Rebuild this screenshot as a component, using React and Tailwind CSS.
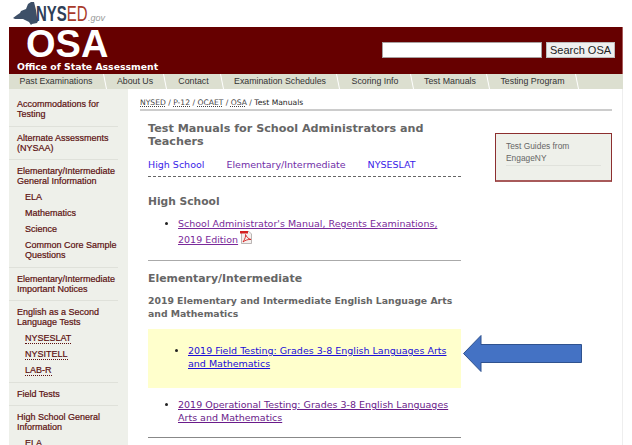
import React from "react";

const tabs = [
  { label: "Past Examinations", w: "w-[98px]" },
  { label: "About Us", w: "w-[60px]" },
  { label: "Contact", w: "w-[57px]" },
  { label: "Examination Schedules", w: "w-[116px]" },
  { label: "Scoring Info", w: "w-[74px]" },
  { label: "Test Manuals", w: "w-[76px]" },
  { label: "Testing Program", w: "w-[89px]" },
];

const sideGroups = [
  { title: ["Accommodations for", "Testing"] },
  { title: ["Alternate Assessments", "(NYSAA)"] },
  {
    title: ["Elementary/Intermediate", "General Information"],
    items: [{ t: ["ELA"] }, { t: ["Mathematics"] }, { t: ["Science"] }, { t: ["Common Core Sample", "Questions"] }],
  },
  { title: ["Elementary/Intermediate", "Important Notices"] },
  {
    title: ["English as a Second", "Language Tests"],
    items: [
      { t: ["NYSESLAT"], u: true },
      { t: ["NYSITELL"], u: true },
      { t: ["LAB-R"], u: true },
    ],
  },
  { title: ["Field Tests"] },
  { title: ["High School General", "Information"], items: [{ t: ["ELA"] }] },
];

function Logo() {
  return (
    <div className="h-[27px] flex items-center pl-[3px] font-['Liberation_Sans',sans-serif]">
      <svg width="27" height="24" viewBox="0 0 27 24" className="mr-[-3px] shrink-0">
        <path
          d="M1 16 L5 13 L8 11 L9 9 L14 7 L16 2 L19 0 L22 0 L24 8 L25 15 L26 19 L25 21 L20 22 L19 23 L17 20 L11 17 L3 17 Z"
          fill="#3e5068"
        />
      </svg>
      <div className="w-[52px] shrink-0">
        <div className="origin-left scale-x-[0.68] text-[22px] leading-none whitespace-nowrap">
          <span className="font-bold text-[#2f4058]">NYS</span>
          <span className="text-[#a83a2a]">ED</span>
        </div>
      </div>
      <span className="text-[9px] leading-none italic text-[#9a9a9a] mt-[9px]">.gov</span>
    </div>
  );
}

function Header() {
  return (
    <div className="h-[47px] bg-[#660000] flex justify-between border-r border-[#a85a5a]">
      <div className="pl-[8px] text-white">
        <div className="font-['Liberation_Sans',sans-serif] font-bold text-[38px] leading-[33px] pl-[9px] pt-[1px] h-[34px]">OSA</div>
        <div className="font-['DejaVu_Sans',sans-serif] font-bold text-[9.3px] leading-[11px] whitespace-nowrap">Office of State Assessment</div>
      </div>
      <div className="flex items-start pt-[15px] pr-[7px] gap-[4px]">
        <div className="w-[160px] h-[16px] bg-white border border-[#a8a0a0]"></div>
        <div className="w-[69px] h-[16px] bg-[#efefef] border border-[#bbbbbb] font-['Liberation_Sans',sans-serif] text-[11px] leading-[14px] text-center text-[#222222]">
          Search OSA
        </div>
      </div>
    </div>
  );
}

function Tabs() {
  return (
    <div className="h-[15px] bg-[#dcdfd0] flex font-['Liberation_Sans',sans-serif] text-[8.8px] leading-[15px] text-[#333333]">
      {tabs.map((tab) => (
        <div key={tab.label} className={`${tab.w} relative text-center whitespace-nowrap pr-[4px]`}>
          {tab.label}
          <svg width="4" height="15" viewBox="0 0 4 15" className="absolute right-0 top-0">
            <path d="M0.5 0 L3.5 15" stroke="#ffffff" strokeWidth="1" />
          </svg>
        </div>
      ))}
    </div>
  );
}

function Sidebar() {
  return (
    <div className="w-[119px] shrink-0 bg-[#eef0ea] pt-[10px] font-['Liberation_Sans',sans-serif] text-[9px] leading-[10px] text-[#5c1010] font-medium overflow-hidden">
      {sideGroups.map((g, i) => (
        <div key={i} className="w-[109px] border-b border-[#dfe1da] pl-[8px] pb-[6.5px] mb-[6px]">
          <div className="whitespace-nowrap [-webkit-text-stroke:0.2px_#5c1010]">
            {g.title.map((l) => (
              <div key={l}>{l}</div>
            ))}
          </div>
          {g.items && (
            <div className="pl-[8px] pt-[6px] flex flex-col gap-[6px] whitespace-nowrap [-webkit-text-stroke:0.2px_#5c1010]">
              {g.items.map((it) => (
                <div key={it.t[0]}>
                  {it.t.map((l) => (
                    <div key={l}>
                      <span className={it.u ? "border-b border-dotted border-[#5c1010]" : ""}>{l}</span>
                    </div>
                  ))}
                </div>
              ))}
            </div>
          )}
        </div>
      ))}
    </div>
  );
}

function PdfIcon() {
  return (
    <svg width="13" height="13" viewBox="0 0 13 13" className="inline-block align-[-1px] ml-[2px]">
      <path d="M1.5 0.5 H9 L11.5 3 V12.5 H1.5 Z" fill="#f4f0ee" stroke="#a09a9a" strokeWidth="0.7" />
      <path d="M0 0 H8 V2.5 H0 Z" fill="#d42020" />
      <path d="M3 11 C5 8 6 5 5.5 3.5 C6.5 5.5 8 8 11 8.5 C8 8.3 5.5 9 3 11 Z" fill="none" stroke="#d42020" strokeWidth="0.9" />
    </svg>
  );
}

function Main() {
  return (
    <div className="flex-1 min-w-0 pl-[12px] text-[9.5px] font-['DejaVu_Sans',sans-serif]">
      <div className="w-[472px] h-[22px] pt-[9px] border-b-2 border-[#cccccc] text-[7.6px] leading-[10px] text-[#444444]">
        <span className="underline decoration-dotted">NYSED</span> / <span className="underline decoration-dotted">P-12</span> /{" "}
        <span className="underline decoration-dotted">OCAET</span> / <span className="underline decoration-dotted">OSA</span> /{" "}
        <span className="text-[#222222]">Test Manuals</span>
      </div>
      <div className="flex">
        <div className="w-[313px] ml-[8px] shrink-0">
          <h1 className="font-bold text-[11.2px] leading-[13px] text-[#666666] mt-[11px]">
            Test Manuals for School Administrators and Teachers
          </h1>
          <div className="flex gap-[22px] mt-[11px] h-[18px] leading-[12px] border-b border-dashed border-[#666666]">
            <span className="text-[#3a22e8]">High School</span>
            <span className="text-[#6f2da8]">Elementary/Intermediate</span>
            <span className="text-[#3a22e8]">NYSESLAT</span>
          </div>
          <h2 className="font-bold text-[10.7px] leading-[14px] text-[#666666] mt-[18px]">High School</h2>
          <ul className="list-disc pl-[30px] pr-[10px] mt-[7px] pb-[13px] leading-[15px] text-[#7a2a9a] border-b border-[#aaaaaa] marker:text-[#222222]">
            <li>
              <span className="underline">School Administrator's Manual, Regents Examinations, 2019 Edition</span>
              <PdfIcon />
            </li>
          </ul>
          <h2 className="font-bold text-[10.9px] leading-[14px] text-[#666666] mt-[11px]">Elementary/Intermediate</h2>
          <h3 className="font-bold text-[9.3px] leading-[13px] text-[#666666] mt-[8px]">
            2019 Elementary and Intermediate English Language Arts and Mathematics
          </h3>
          <div className="h-[59px] bg-[#ffffcc] mt-[9px] pt-[15px]">
            <ul className="list-disc pl-[40px] pr-[10px] leading-[13px] text-[#1a0dd8] marker:text-[#222222]">
              <li>
                <span className="underline">2019 Field Testing: Grades 3-8 English Languages Arts and Mathematics</span>
              </li>
            </ul>
          </div>
          <ul className="list-disc pl-[30px] pr-[10px] mt-[10px] pb-[13px] leading-[13px] text-[#6a1b8a] border-b border-[#888888] marker:text-[#222222]">
            <li>
              <span className="underline">2019 Operational Testing: Grades 3-8 English Languages Arts and Mathematics</span>
            </li>
          </ul>
        </div>
        <div className="ml-[34px] mt-[22px]">
          <div className="w-[117px] h-[49px] bg-[#eef0ea] border border-[#8c2f2f] border-b-2 border-b-[#a85a5a] pt-[6px] pl-[10px] font-['Liberation_Sans',sans-serif] text-[8.4px] leading-[12px] text-[#666666]">
            <div className="w-[95px] border-b border-[#e0e2dc] pb-[1px]">Test Guides from EngageNY</div>
          </div>
        </div>
      </div>
    </div>
  );
}

function Arrow() {
  return (
    <svg width="122" height="40" viewBox="0 0 122 40" className="absolute left-[462px] top-[334px]">
      <path d="M1.5 19.5 L19 1.5 V10.5 H119.5 V28.5 H19 V37.5 Z" fill="#4472c4" stroke="#2f528f" strokeWidth="1" />
    </svg>
  );
}

export default function App() {
  return (
    <div className="relative w-[632px] h-[445px] overflow-hidden bg-white">
      <div className="w-[614px] ml-[9px]">
        <Logo />
        <Header />
        <Tabs />
        <div className="flex h-[356px] border-r border-[#eeeeee]">
          <Sidebar />
          <Main />
        </div>
      </div>
      <Arrow />
    </div>
  );
}
